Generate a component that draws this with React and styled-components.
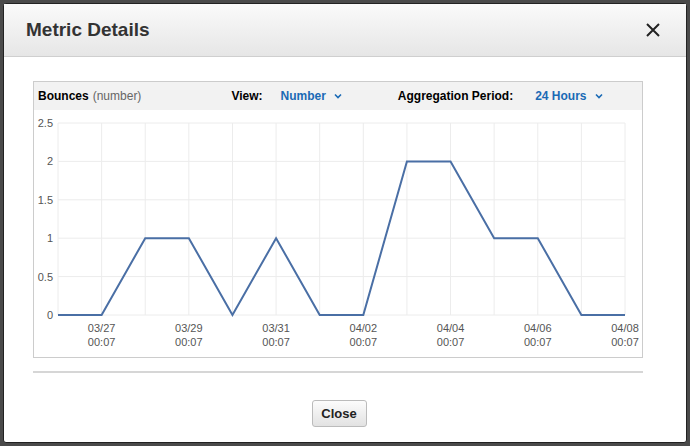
import React from "react";
import styled, { createGlobalStyle } from "styled-components";

const Global = createGlobalStyle`
  body { margin: 0; background: #4a4a4a; font-family: "Liberation Sans", Arial, sans-serif; }
`;

const Page = styled.div`
  width: 690px;
  height: 446px;
  padding: 3px;
  box-sizing: border-box;
`;

const Modal = styled.div`
  height: 440px;
  background: #fff;
  border: 1px solid #222;
  border-radius: 3px;
  box-sizing: border-box;
  display: flex;
  flex-direction: column;
`;

const Header = styled.div`
  height: 53px;
  flex: none;
  box-sizing: border-box;
  background: linear-gradient(#fafafa, #e6e6e6);
  border-bottom: 1px solid #cfcfcf;
  display: flex;
  align-items: center;
  justify-content: space-between;
  padding: 0 26px 0 22px;
`;

const Title = styled.h3`
  margin: 0;
  font-size: 19px;
  font-weight: bold;
  color: #333;
`;

const Body = styled.div`
  padding: 24px 43px 0 29px;
`;

const Panel = styled.div`
  border: 1px solid #ccc;
  height: 277px;
  box-sizing: border-box;
`;

const Bar = styled.div`
  height: 28px;
  background: #f2f2f2;
  display: flex;
  align-items: center;
  padding: 0 0 0 4px;
  font-size: 12px;
  color: #000;
`;

const Label = styled.span`
  font-weight: bold;
  margin-left: ${(p) => p.ml || 0}px;
`;

const Muted = styled.span`
  color: #666;
  margin-left: 4px;
`;

const Select = styled.span`
  color: #1a6ab5;
  font-weight: bold;
  margin-left: ${(p) => p.ml}px;
  display: inline-flex;
  align-items: center;
  gap: 8px;
`;

const Rule = styled.div`
  height: 2px;
  background: #d6d6d6;
  margin-top: 13px;
`;

const Footer = styled.div`
  display: flex;
  justify-content: center;
  padding: 27px 12px 0 0;
`;

const Button = styled.button`
  width: 55px;
  height: 27px;
  border: 1px solid #bbb;
  border-radius: 3px;
  background: linear-gradient(#fcfcfc, #e2e2e2);
  font-family: "Liberation Sans", Arial, sans-serif;
  font-weight: bold;
  font-size: 13px;
  color: #222;
`;

const Chevron = () => (
  <svg width="8" height="6" viewBox="0 0 8 6">
    <path d="M1 1.5 L4 4.5 L7 1.5" fill="none" stroke="#1a6ab5" strokeWidth="1.6" />
  </svg>
);

const values = [0, 0, 1, 1, 0, 1, 0, 0, 2, 2, 1, 1, 0, 0];
const x0 = 24, x1 = 591, yTop = 13, yBot = 205;
const step = (x1 - x0) / 13;
const yv = (v) => yBot - (v / 2.5) * (yBot - yTop);
const dates = ["03/27", "03/29", "03/31", "04/02", "04/04", "04/06", "04/08"];

function Chart() {
  const pts = values.map((v, i) => `${x0 + i * step},${yv(v)}`).join(" ");
  return (
    <svg width="608" height="247" style={{ display: "block" }}>
      {values.map((_, i) => (
        <line key={i} x1={x0 + i * step} x2={x0 + i * step} y1={yTop} y2={yBot} stroke="#ececec" />
      ))}
      {[0, 0.5, 1, 1.5, 2, 2.5].map((v) => (
        <g key={v}>
          <line x1={x0} x2={x1} y1={yv(v)} y2={yv(v)} stroke="#ececec" />
          <text x={19} y={yv(v) + 4} fontSize="11" fill="#555" textAnchor="end" fontFamily="Liberation Sans, Arial, sans-serif">{v}</text>
        </g>
      ))}
      <polyline points={pts} fill="none" stroke="#4a6fa5" strokeWidth="2" />
      {dates.map((d, i) => {
        const x = x0 + (1 + i * 2) * step;
        return (
          <g key={d} fontSize="11" fill="#555" textAnchor="middle" fontFamily="Liberation Sans, Arial, sans-serif">
            <text x={Math.min(x, 592)} y={yBot + 17}>{d}</text>
            <text x={Math.min(x, 592)} y={yBot + 31}>00:07</text>
          </g>
        );
      })}
    </svg>
  );
}

export default function App() {
  return (
    <Page>
      <Global />
      <Modal>
        <Header>
          <Title>Metric Details</Title>
          <svg width="14" height="14" viewBox="0 0 14 14">
            <path d="M1 1 L13 13 M13 1 L1 13" stroke="#222" strokeWidth="2" />
          </svg>
        </Header>
        <Body>
          <Panel>
            <Bar>
              <Label>Bounces</Label>
              <Muted>(number)</Muted>
              <Label ml={90}>View:</Label>
              <Select ml={18}>Number <Chevron /></Select>
              <Label ml={56}>Aggregation Period:</Label>
              <Select ml={22}>24 Hours <Chevron /></Select>
            </Bar>
            <Chart />
          </Panel>
          <Rule />
        </Body>
        <Footer>
          <Button>Close</Button>
        </Footer>
      </Modal>
    </Page>
  );
}
